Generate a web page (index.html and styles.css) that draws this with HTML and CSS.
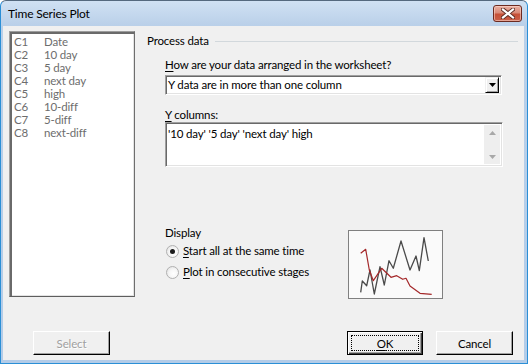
FILE: index.html
```html
<!DOCTYPE html>
<html lang="en">
<head>
<meta charset="utf-8">
<title>Time Series Plot</title>
<link rel="stylesheet" href="styles.css">
</head>
<body>
<div class="window">
  <div class="titlebar">
    <span class="title">Time Series Plot</span>
    <span class="close" aria-label="Close">
      <svg width="14" height="11" viewBox="0 0 14 11">
        <path d="M2 1.5 L12 9.5 M12 1.5 L2 9.5" stroke="#5a2a22" stroke-width="4" stroke-linecap="square" fill="none"/>
        <path d="M2 1.5 L12 9.5 M12 1.5 L2 9.5" stroke="#ffffff" stroke-width="2.2" stroke-linecap="square" fill="none"/>
      </svg>
    </span>
  </div>
  <div class="client">
    <div class="main">
      <div class="varlist">
        <div class="var"><span class="col">C1</span><span>Date</span></div>
        <div class="var"><span class="col">C2</span><span>10 day</span></div>
        <div class="var"><span class="col">C3</span><span>5 day</span></div>
        <div class="var"><span class="col">C4</span><span>next day</span></div>
        <div class="var"><span class="col">C5</span><span>high</span></div>
        <div class="var"><span class="col">C6</span><span>10-diff</span></div>
        <div class="var"><span class="col">C7</span><span>5-diff</span></div>
        <div class="var"><span class="col">C8</span><span>next-diff</span></div>
      </div>
      <div class="panel">
        <div class="group-head"><span>Process data</span><span class="rule"></span></div>
        <div class="group-body">
          <div class="lbl lbl-first"><u>H</u>ow are your data arranged in the worksheet?</div>
          <div class="combo">
            <span class="combo-text">Y data are in more than one column</span>
            <span class="drop">
              <svg width="7" height="4" viewBox="0 0 7 4"><path d="M0 0 H7 L3.5 4 Z" fill="#000"/></svg>
            </span>
          </div>
          <div class="lbl lbl-y"><u>Y</u> columns:</div>
          <div class="textbox">
            <span class="tb-text">'10 day' '5 day' 'next day' high</span>
            <div class="vscroll">
              <svg width="7" height="4" viewBox="0 0 7 4"><path d="M0 4 H7 L3.5 0 Z" fill="#a8a8a8"/></svg>
              <svg width="7" height="4" viewBox="0 0 7 4"><path d="M0 0 H7 L3.5 4 Z" fill="#a8a8a8"/></svg>
            </div>
          </div>
          <div class="display">
            <div class="display-opts">
              <div class="lbl">Display</div>
              <div class="radio-row first"><span class="radio checked"></span><span><u>S</u>tart all at the same time</span></div>
              <div class="radio-row"><span class="radio"></span><span><u>P</u>lot in consecutive stages</span></div>
            </div>
            <div class="preview">
              <svg width="93" height="67" viewBox="1 1 93 67">
                <polyline fill="none" stroke="#4a4a4a" stroke-width="1.3" stroke-linejoin="round"
                  points="12.7,62.3 14.3,51 18.7,55.7 22,40 26.3,64 32,36.7 36.3,55 41,30.7 45.3,38.3 53,11 62,40 68,26 71.3,40.7 76,7.7 80.3,31"/>
                <polyline fill="none" stroke="#a4282a" stroke-width="1.2" stroke-linejoin="round"
                  points="12.7,23.3 17.7,19.3 21.3,40 25.3,50.7 33.7,38.3 43,47.3 48.7,45.7 54.7,49.3 58,48.3 62,56 72,63.3 83.7,64.3"/>
              </svg>
            </div>
          </div>
        </div>
      </div>
    </div>
    <div class="footer">
      <button class="btn btn-select" disabled>Select</button>
      <span class="spacer"></span>
      <button class="btn btn-ok"><span class="focus"><u>O</u>K</span></button>
      <button class="btn btn-cancel">Cancel</button>
    </div>
  </div>
</div>
</body>
</html>
```
FILE: styles.css
```css
* { box-sizing: border-box; }
html, body { margin: 0; padding: 0; }
body {
  width: 528px;
  height: 364px;
  overflow: hidden;
  background: #ffffff;
  font-family: Lato, "Noto Sans", sans-serif;
  font-size: 11.5px;
  letter-spacing: -0.15px;
  color: #000;
}
u { text-decoration: underline; text-underline-offset: 2px; }

.window {
  width: 528px;
  height: 364px;
  display: flex;
  flex-direction: column;
  border: 1px solid #4e6072;
  border-color: #55697e #2b8fd6 #2b8fd6 #2b8fd6;
  border-radius: 6px 6px 0 0;
  background: linear-gradient(#d0e1f3 0, #bad0e9 24px, #b3cce8 100%);
  padding: 0 3px 3px 2px;
}

.titlebar {
  height: 25px;
  flex: none;
  display: flex;
  justify-content: space-between;
  align-items: flex-start;
  padding: 0 2px 0 5px;
}
.title {
  margin-top: 5px;
  line-height: 16px;
  font-size: 12px;
  letter-spacing: -0.2px;
  color: #000;
}
.close {
  width: 29px;
  height: 17px;
  margin-top: 4px;
  border: 1px solid #6c2a20;
  border-radius: 3px;
  background: linear-gradient(#eab0a2 0, #d98a78 45%, #c65037 55%, #c9604a 100%);
  box-shadow: inset 0 0 0 1px rgba(255, 220, 210, 0.55);
  display: flex;
  align-items: center;
  justify-content: center;
}

.client {
  flex: 1;
  background: #f0f0f0;
  display: flex;
  flex-direction: column;
  padding: 5px 6px 0 6px;
}

.main {
  display: flex;
  gap: 12px;
  height: 266px;
}

.varlist {
  width: 126px;
  height: 266px;
  background: #fff;
  border: 1px solid;
  border-color: #9c9c9c #6e6e6e #5e5e5e #a0a0a0;
  box-shadow: inset 2px 2px 0 #6a6a6a, inset -1px -1px 0 #e3e3e3;
  padding: 3px 0 0 4px;
  color: #6d6d6d;
}
.var {
  display: flex;
  height: 13px;
  line-height: 13px;
}
.col { width: 30px; }

.panel { flex: 1; }

.group-head {
  margin-top: 3px;
  height: 14px;
  line-height: 14px;
  display: flex;
  align-items: center;
}
.rule {
  flex: 1;
  height: 1px;
  background: #d2d8dc;
  margin-left: 6px;
}

.group-body { padding-left: 18px; }

.lbl { line-height: 14px; height: 14px; }
.lbl-first { margin-top: 10px; }
.lbl-y { margin-top: 13px; }

.combo {
  margin-top: 3px;
  width: 337px;
  height: 20px;
  background: #fff;
  border: 1px solid;
  border-color: #a0a0a0 #ffffff #ffffff #a0a0a0;
  box-shadow: inset 1px 1px 0 #696969, inset -1px -1px 0 #e3e3e3;
  display: flex;
  align-items: center;
  justify-content: space-between;
  padding: 0 2px 0 2px;
}
.combo-text { line-height: 14px; }
.drop {
  width: 14px;
  height: 16px;
  background: #f0f0f0;
  border: 1px solid;
  border-color: #f0f0f0 #000 #000 #f0f0f0;
  box-shadow: inset 1px 1px 0 #fff, inset -1px -1px 0 #a0a0a0;
  display: flex;
  align-items: center;
  justify-content: center;
}

.textbox {
  width: 338px;
  height: 45px;
  background: #fff;
  border: 1px solid;
  border-color: #a0a0a0 #ffffff #ffffff #a0a0a0;
  box-shadow: inset 1px 1px 0 #696969, inset -1px -1px 0 #e3e3e3;
  display: flex;
  justify-content: space-between;
  padding: 2px 2px 2px 2px;
}
.tb-text { line-height: 16px; padding-top: 1px; }
.vscroll {
  width: 16px;
  height: 39px;
  background: #eeeeee;
  display: flex;
  flex-direction: column;
  justify-content: space-between;
  align-items: center;
  padding: 6px 0 5px 0;
}
.vscroll svg { display: block; }

.display {
  margin-top: 59px;
  display: flex;
  align-items: flex-start;
}
.display-opts { width: 183px; }
.radio-row {
  display: flex;
  align-items: center;
  height: 16px;
  margin-top: 5px;
  gap: 4px;
}
.radio-row.first { margin-top: 3px; }
.radio-row span:last-child { line-height: 14px; }
.radio {
  width: 13px;
  height: 13px;
  border-radius: 50%;
  border: 1px solid #b0b0b0;
  background: radial-gradient(circle at 60% 60%, #ffffff 0, #f6f6f6 45%, #dcdcdc 100%);
  display: flex;
  align-items: center;
  justify-content: center;
  margin-left: 1px;
}
.radio.checked::after {
  content: "";
  width: 5px;
  height: 5px;
  border-radius: 50%;
  background: #1b1b1b;
}

.preview {
  margin-top: 4px;
  width: 95px;
  height: 69px;
  border: 1px solid #808080;
  background: #fafafa;
}
.preview svg { display: block; }

.footer {
  margin-top: 34px;
  display: flex;
  align-items: flex-start;
}
.spacer { flex: 1; }
.btn {
  height: 24px;
  font-family: inherit;
  font-size: 11.5px;
  letter-spacing: -0.15px;
  color: #000;
  background: #f0f0f0;
  border: 1px solid;
  border-color: #ffffff #000000 #000000 #ffffff;
  box-shadow: inset -1px -1px 0 #a0a0a0;
  padding: 0;
  display: flex;
  align-items: center;
  justify-content: center;
}
.btn-select {
  width: 77px;
  margin-left: 24px;
  color: #a0a0a0;
  text-shadow: 1px 1px 0 #ffffff;
}
.btn-ok {
  width: 76px;
  border-color: #000;
  box-shadow: inset 1px 1px 0 #ffffff, inset -1px -1px 0 #404040, inset -2px -2px 0 #a0a0a0;
  padding: 3px;
}
.focus {
  width: 100%;
  height: 100%;
  border: 1px dotted #000;
  display: flex;
  align-items: center;
  justify-content: center;
}
.btn-cancel {
  width: 77px;
  margin-left: 13px;
  margin-right: 5px;
}
```
